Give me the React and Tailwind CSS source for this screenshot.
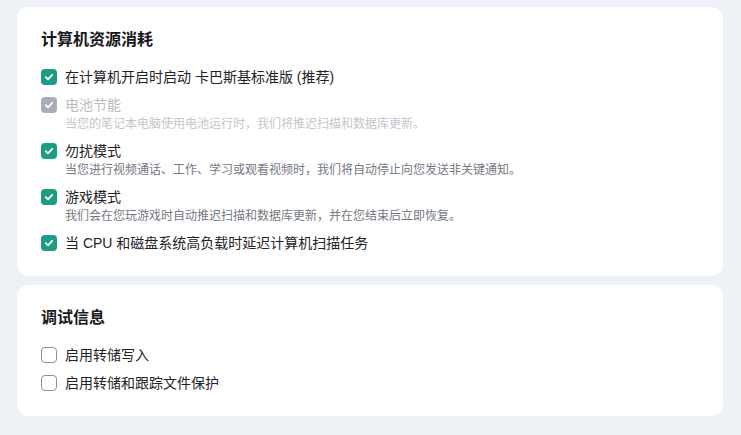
import { useState } from "react";

const font = {
    fontFamily: '"Liberation Sans", "Noto Sans CJK SC", sans-serif',
};

const resourceItems = [
    { id: "autostart", label: "在计算机开启时启动 卡巴斯基标准版 (推荐)", checked: true },
    {
        id: "battery",
        label: "电池节能",
        desc: "当您的笔记本电脑使用电池运行时，我们将推迟扫描和数据库更新。",
        checked: true,
        disabled: true,
    },
    {
        id: "dnd",
        label: "勿扰模式",
        desc: "当您进行视频通话、工作、学习或观看视频时，我们将自动停止向您发送非关键通知。",
        checked: true,
    },
    {
        id: "game",
        label: "游戏模式",
        desc: "我们会在您玩游戏时自动推迟扫描和数据库更新，并在您结束后立即恢复。",
        checked: true,
    },
    { id: "cpu", label: "当 CPU 和磁盘系统高负载时延迟计算机扫描任务", checked: true },
];

const debugItems = [
    { id: "dump", label: "启用转储写入", checked: false },
    { id: "protect", label: "启用转储和跟踪文件保护", checked: false },
];

function CheckBox({ checked, disabled }) {
    if (!checked) {
        return (
            <span className="w-4 h-4 shrink-0 rounded-[4px] border-[1.5px] border-[#8b9099] bg-white" />
        );
    }
    return (
        <span
            className={`w-4 h-4 shrink-0 rounded-[4px] flex items-center justify-center ${
                disabled ? "bg-[#a9adb4]" : "bg-[#1d9c84]"
            }`}
        >
            <svg width="10" height="10" viewBox="0 0 10 10" fill="none">
                <path
                    d="M1.8 5.2 L4 7.3 L8.2 2.8"
                    stroke="white"
                    strokeWidth="1.8"
                    strokeLinecap="round"
                    strokeLinejoin="round"
                />
            </svg>
        </span>
    );
}

function OptionRow({ item, onToggle }) {
    return (
        <div
            className={`flex flex-col ${item.disabled ? "" : "cursor-pointer"}`}
            onClick={() => !item.disabled && onToggle(item.id)}
        >
            <div className="flex items-center gap-2 h-5">
                <CheckBox checked={item.checked} disabled={item.disabled} />
                <span
                    className={`text-[14px] leading-5 ${
                        item.disabled ? "text-[#b9bcc2]" : "text-[#1f2226]"
                    }`}
                >
                    {item.label}
                </span>
            </div>
            {item.desc && (
                <p
                    className={`pl-6 text-[12px] leading-[18px] ${
                        item.disabled ? "text-[#c3c6cb]" : "text-[#74797f]"
                    }`}
                >
                    {item.desc}
                </p>
            )}
        </div>
    );
}

function Section({ title, items, onToggle }) {
    return (
        <div className="bg-white rounded-xl px-6 pt-[21px] pb-[23px]">
            <h3 className="text-[16px] leading-6 font-bold text-[#16181b]">{title}</h3>
            <div className="mt-[15px] flex flex-col gap-2">
                {items.map((item) => (
                    <OptionRow key={item.id} item={item} onToggle={onToggle} />
                ))}
            </div>
        </div>
    );
}

export default function App() {
    const [resources, setResources] = useState(resourceItems);
    const [debug, setDebug] = useState(debugItems);

    const toggle = (setter) => (id) =>
        setter((prev) =>
            prev.map((it) => (it.id === id ? { ...it, checked: !it.checked } : it))
        );

    return (
        <div className="w-[741px] h-[435px] bg-[#eef1f6] pl-[17px] pr-[18px] pt-[7px]" style={font}>
            <div className="flex flex-col gap-[9px]">
                <Section title="计算机资源消耗" items={resources} onToggle={toggle(setResources)} />
                <Section title="调试信息" items={debug} onToggle={toggle(setDebug)} />
            </div>
        </div>
    );
}
